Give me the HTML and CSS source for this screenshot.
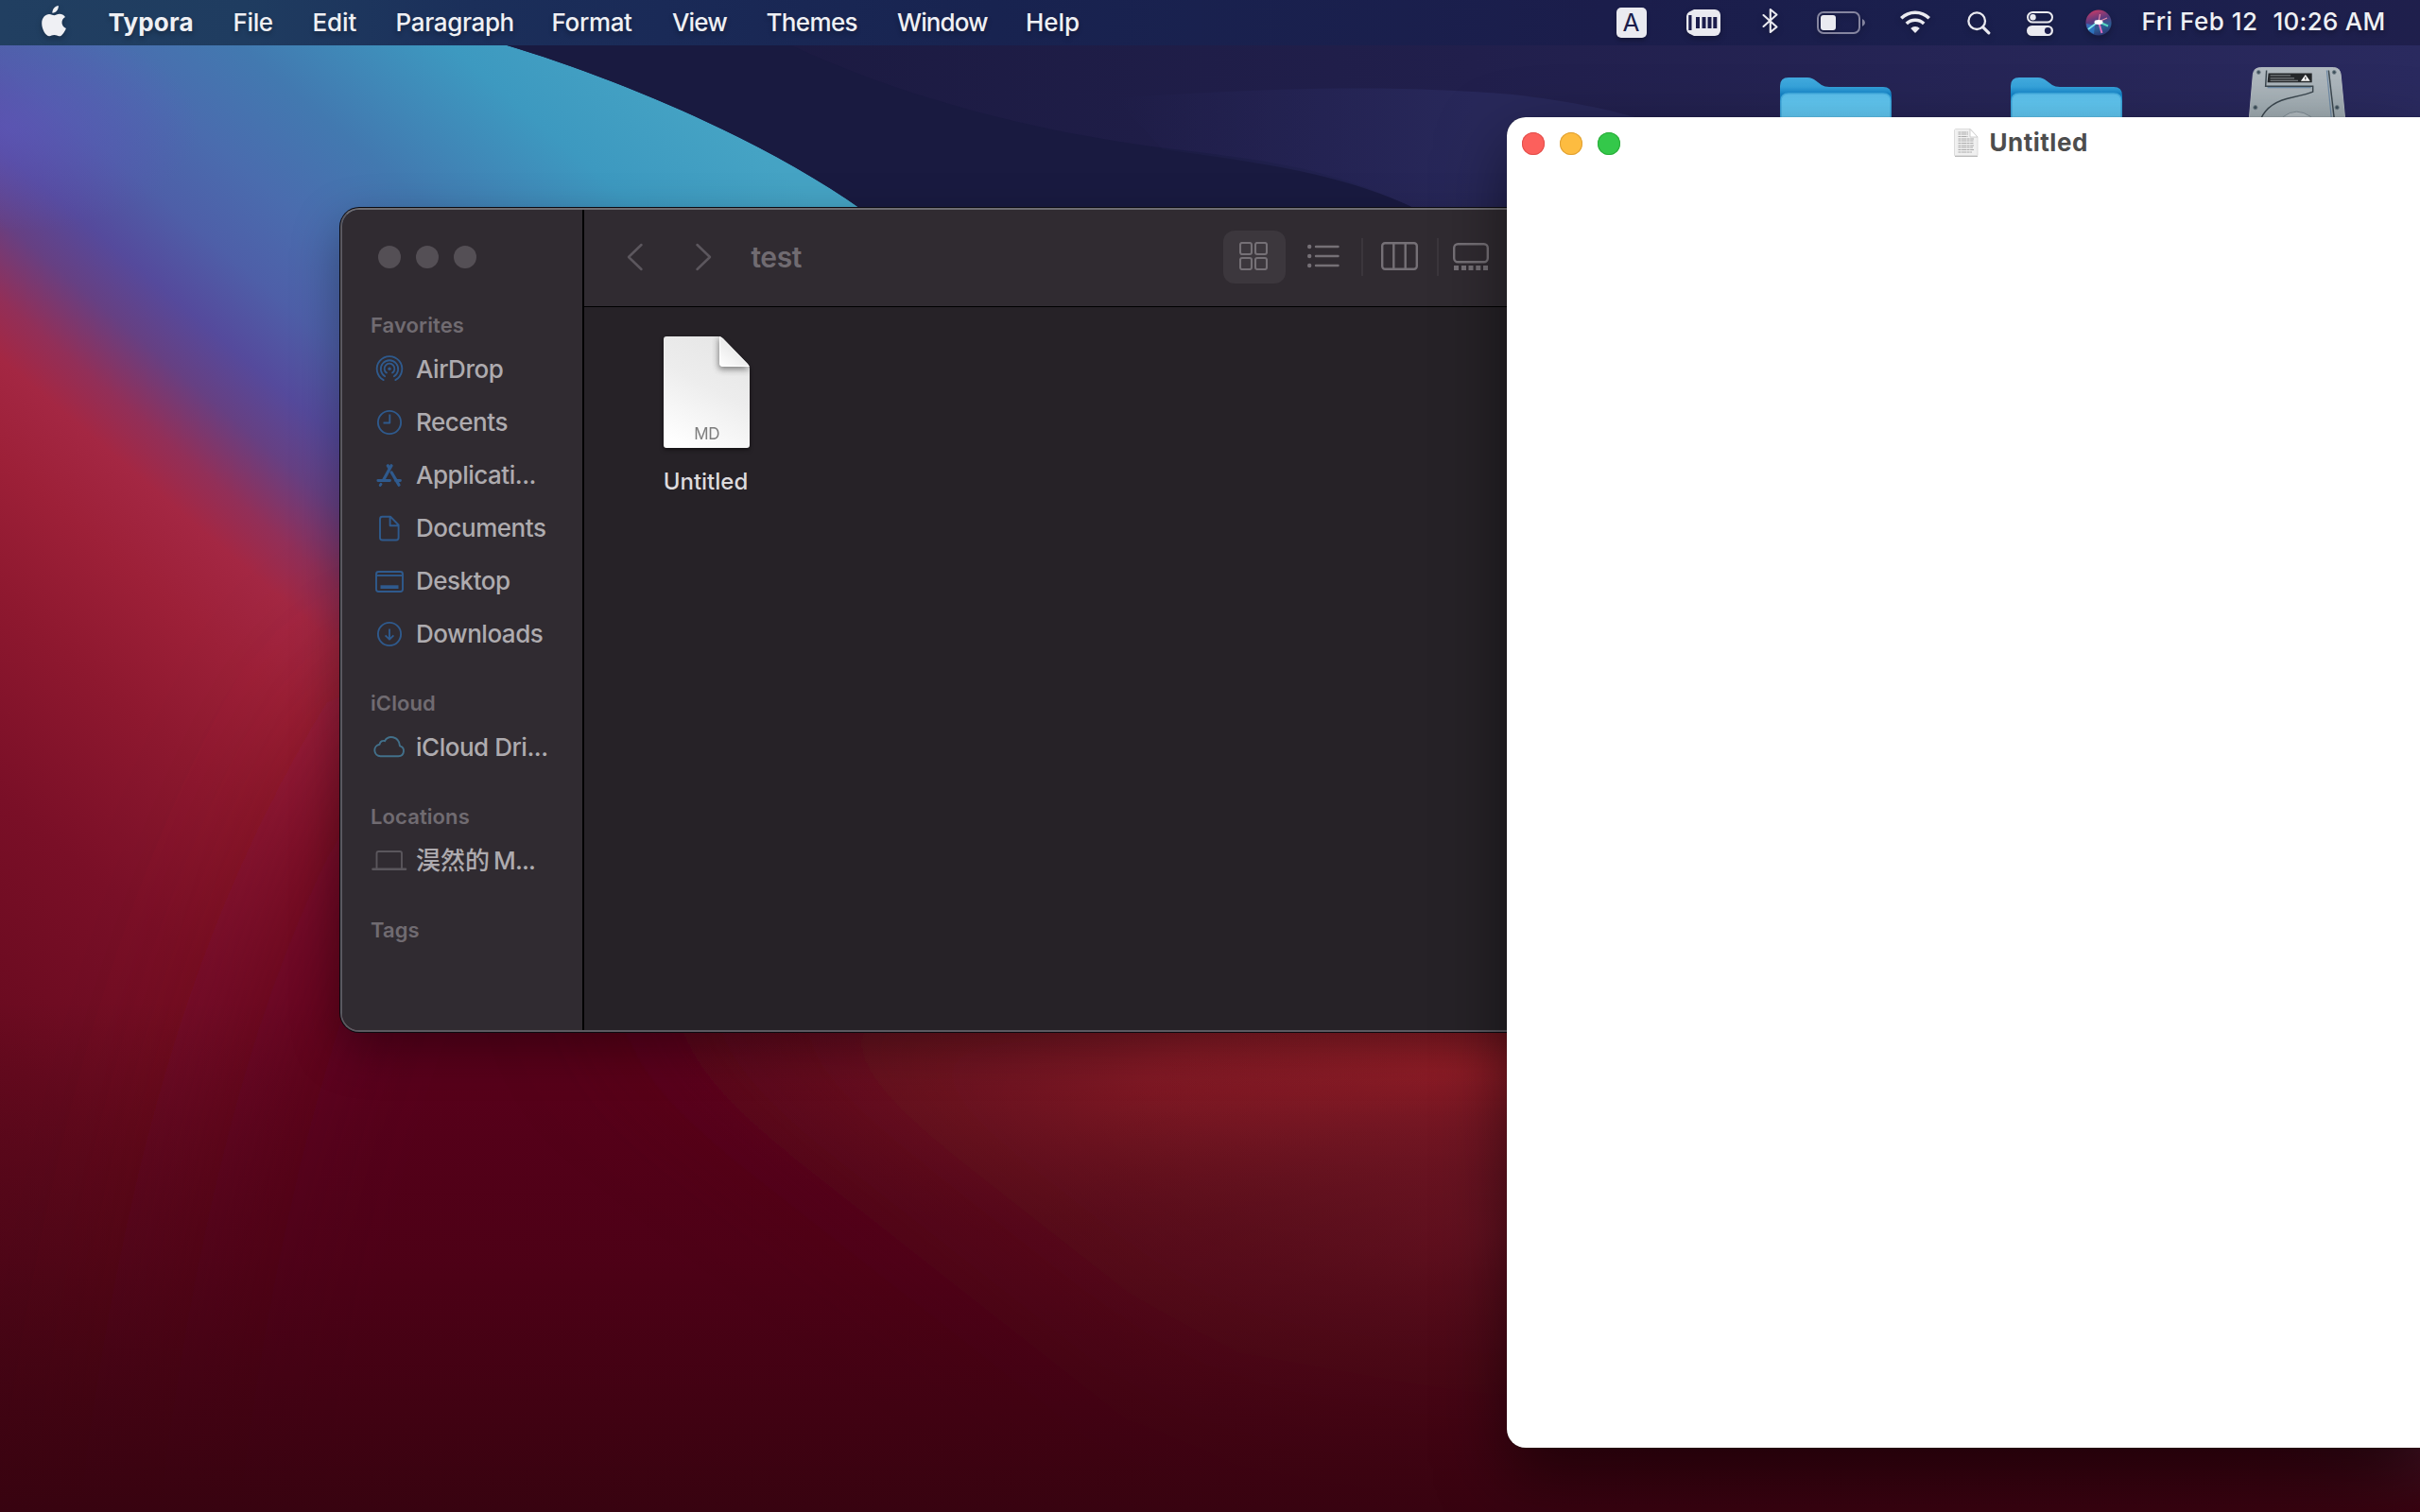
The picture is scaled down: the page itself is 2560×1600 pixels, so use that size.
FILE: index.html
```
<!DOCTYPE html>
<html lang="en">
<head>
<meta charset="utf-8">
<title>Desktop</title>
<link rel="stylesheet" href="styles.css">
</head>
<body>
<svg class="wallpaper" viewBox="0 0 2560 1600" preserveAspectRatio="none" aria-hidden="true">
  <defs>
    <linearGradient id="band" gradientUnits="userSpaceOnUse" x1="260" y1="-304" x2="-780" y2="912">
      <stop offset="0" stop-color="#45a3c4"/>
      <stop offset=".08" stop-color="#3d99c0"/>
      <stop offset=".17" stop-color="#4279b0"/>
      <stop offset=".23" stop-color="#4a6cae"/>
      <stop offset=".28" stop-color="#4e5fa8"/>
      <stop offset=".325" stop-color="#554a9c"/>
      <stop offset=".36" stop-color="#664083"/>
      <stop offset=".40" stop-color="#922f58"/>
      <stop offset=".43" stop-color="#a42743"/>
      <stop offset=".48" stop-color="#9d2038"/>
      <stop offset=".55" stop-color="#8e182f"/>
      <stop offset=".65" stop-color="#7a0f27"/>
      <stop offset=".78" stop-color="#680a1f"/>
      <stop offset="1" stop-color="#52071a"/>
    </linearGradient>
    <linearGradient id="floor" x1="0" y1="0" x2="0" y2="1">
      <stop offset="0" stop-color="#34020d" stop-opacity="0"/>
      <stop offset=".5" stop-color="#3a020f" stop-opacity=".42"/>
      <stop offset="1" stop-color="#380310"/>
    </linearGradient>
    <linearGradient id="navy" gradientUnits="userSpaceOnUse" x1="560" y1="0" x2="2560" y2="0">
      <stop offset="0" stop-color="#1a193e"/>
      <stop offset=".5" stop-color="#211f4c"/>
      <stop offset="1" stop-color="#2a2a5f"/>
    </linearGradient>
    <linearGradient id="swell" gradientUnits="userSpaceOnUse" x1="1180" y1="0" x2="1560" y2="0">
      <stop offset="0" stop-color="#252558" stop-opacity="0"/>
      <stop offset="1" stop-color="#28285a"/>
    </linearGradient>
    <radialGradient id="violet"><stop offset="0" stop-color="#6057bd"/><stop offset="1" stop-color="#6057bd" stop-opacity="0"/></radialGradient>
    <radialGradient id="ember"><stop offset="0" stop-color="#b0242c"/><stop offset=".4" stop-color="#98202a" stop-opacity=".7"/><stop offset="1" stop-color="#6a1820" stop-opacity="0"/></radialGradient>
    <radialGradient id="rose"><stop offset="0" stop-color="#801c2c"/><stop offset=".5" stop-color="#701826" stop-opacity=".6"/><stop offset="1" stop-color="#6a1622" stop-opacity="0"/></radialGradient>
    <filter id="soft" x="-40%" y="-40%" width="180%" height="180%"><feGaussianBlur stdDeviation="90"/></filter>
  </defs>
  <rect width="2560" height="1600" fill="url(#band)"/>
  <ellipse cx="10" cy="135" rx="200" ry="110" fill="url(#violet)" opacity=".6"/>
  <path d="M430 750H2560V1800H150Q200 1100 430 750Z" fill="#5c001b" filter="url(#soft)"/>
  <path d="M640 1000L1700 1000V1560L1250 1480Z" fill="#6e1820" opacity=".8" filter="url(#soft)"/>
  <ellipse cx="1540" cy="1135" rx="820" ry="210" fill="url(#ember)"/>
  <ellipse cx="1580" cy="1300" rx="480" ry="250" fill="url(#rose)" opacity=".8"/>
  <rect y="1060" width="2560" height="540" fill="url(#floor)"/>
  <path d="M480 32L533 47C660 85 810 150 912 222L1000 400H2560V0H480Z" fill="url(#navy)"/>
  <path d="M533 47C660 85 810 150 912 222H1500C1420 183 1360 172 1260 160C1080 140 940 96 837 48Z" fill="#191a40"/>
  <path d="M1180 104C1350 92 1480 90 1600 100C1660 107 1700 115 1740 127V222H1500C1420 183 1330 172 1230 158Z" fill="url(#swell)"/>
</svg>

<header class="menubar">
  <svg class="apple" viewBox="0 0 26 34"><path d="M17.800 0c.3 2.200-.6 4.200-1.800 5.600-1.200 1.400-3 2.400-4.600 2.200-.3-2 .7-4.200 1.800-5.400C14.400 1 16.300.100 17.800 0zM13.300 10.300c1.400 0 3.200-1.500 5.900-1.500 2 0 4.300 1 5.800 3.100-5.200 3-4.300 10 .9 12-.8 2.200-3.900 8.400-7.200 8.400-2 0-2.900-1.200-5.300-1.200s-3.300 1.200-5.200 1.200C4.500 32.300.200 25.200.200 18.800c0-6.300 4-9.800 7.800-9.800 2.400 0 4 1.300 5.300 1.300z" fill="#eff0f4"/></svg>
  <nav class="menus"><b>Typora</b><span>File</span><span>Edit</span><span>Paragraph</span><span>Format</span><span>View</span><span>Themes</span><span>Window</span><span>Help</span></nav>
  <div class="status">
    <span class="ime">A</span>
    <svg class="mem" viewBox="0 0 36 28"><path d="M8 0h22a6 6 0 0 1 6 6v16a6 6 0 0 1-6 6H8L3 25.500A6 6 0 0 1 0 21V7a6 6 0 0 1 3-4.500z" fill="#eaeaf0"/><path d="M2.300 6h3.200v16H2.300zM10 8h4v12h-4zM16.500 8h4v12h-4zM22.500 8h4v12h-4zM28.300 8h4v12h-4z" fill="#1b1c4b"/></svg>
    <svg class="bt" viewBox="0 0 18 28"><path d="M1.500 8L15.500 20.500 8.800 26V2l6.700 5.500L1.500 20" fill="none" stroke="#eaeaf0" stroke-width="2.100" stroke-linejoin="round" stroke-linecap="round"/></svg>
    <svg class="bat" viewBox="0 0 52 24"><rect x="1" y="1" width="44" height="22" rx="6" fill="none" stroke="#85859f" stroke-width="2"/><rect x="4" y="4" width="16" height="16" rx="3" fill="#eaeaf0"/><path d="M48 8q3 1.500 3 4t-3 4z" fill="#85859f"/></svg>
    <svg class="wifi" viewBox="0 0 32 24"><g fill="none" stroke="#eaeaf0" stroke-width="3.600"><path d="M1.200 8.300a21 21 0 0 1 29.600 0"/><path d="M6.800 14a13.200 13.200 0 0 1 18.400 0"/></g><path d="M16 24l-4.800-5a6.800 6.800 0 0 1 9.600 0z" fill="#eaeaf0"/></svg>
    <svg class="find" viewBox="0 0 25 25"><circle cx="10.200" cy="10.200" r="8.800" fill="none" stroke="#eaeaf0" stroke-width="2.300"/><path d="M16.800 16.800l6 6" stroke="#eaeaf0" stroke-width="3.200" stroke-linecap="round"/></svg>
    <svg class="cc" viewBox="0 0 28 26"><rect x="1" y="1" width="26" height="10.600" rx="5.300" fill="none" stroke="#eaeaf0" stroke-width="2"/><circle cx="6.500" cy="6.300" r="3.200" fill="#eaeaf0"/><rect y="15" width="28" height="11" rx="5.500" fill="#eaeaf0"/><circle cx="22.300" cy="20.500" r="3.400" fill="#1b1c4b"/></svg>
    <svg class="siri" viewBox="0 0 28 28">
      <defs><linearGradient id="orb" x1=".3" y1="0" x2=".6" y2="1"><stop offset="0" stop-color="#c93a66"/><stop offset=".4" stop-color="#5a3a80"/><stop offset=".7" stop-color="#2c5f95"/><stop offset="1" stop-color="#2b3470"/></linearGradient></defs>
      <circle cx="14" cy="14" r="13.600" fill="url(#orb)"/><path d="M1 15a13 13 0 0 0 8 11L10 17z" fill="#2f7fd0" opacity=".7"/>
      <path d="M13.500 13L3 21" stroke="#7fe8ea" stroke-width="1.800"/><path d="M14 13l10 4.500" stroke="#56d6c0" stroke-width="2"/><path d="M14 13l3.500 12" stroke="#e070c0" stroke-width="2"/><path d="M14 13L15.500 5M14 13l9-4" stroke="#e58aa8" stroke-width="1.300"/><ellipse cx="14" cy="13.500" rx="4.500" ry="2.400" fill="#fff"/>
    </svg>
    <span class="date">Fri Feb 12</span><span class="time">10:26 AM</span>
  </div>
</header>

<svg class="deskicon folder f1" viewBox="0 0 118 60">
  <defs>
    <linearGradient id="fb" x1="0" y1="0" x2="0" y2="1"><stop offset="0" stop-color="#42aadf"/><stop offset=".16" stop-color="#36a4dc"/><stop offset=".3" stop-color="#1583c6"/><stop offset="1" stop-color="#1583c6"/></linearGradient>
    <linearGradient id="ff" x1="0" y1="0" x2="0" y2="1"><stop offset="0" stop-color="#5cbfec"/><stop offset=".2" stop-color="#60c7f2"/><stop offset="1" stop-color="#62c8f3"/></linearGradient>
  </defs>
  <path d="M0 60V9Q0 0 9 0H29Q34 0 38 3.500L44 8Q47 10 52 10H109Q118 10 118 19V60Z" fill="url(#fb)"/>
  <path d="M1 60V25Q1 17 9 17H109Q117 17 117 25V60Z" fill="url(#ff)" stroke="#47b0e2" stroke-width="1.500"/>
</svg>
<svg class="deskicon folder f2" viewBox="0 0 118 60">
  <path d="M0 60V9Q0 0 9 0H29Q34 0 38 3.500L44 8Q47 10 52 10H109Q118 10 118 19V60Z" fill="url(#fb)"/>
  <path d="M1 60V25Q1 17 9 17H109Q117 17 117 25V60Z" fill="url(#ff)" stroke="#47b0e2" stroke-width="1.500"/>
</svg>
<svg class="deskicon disk" viewBox="0 0 106 60">
  <defs><linearGradient id="hd" x1="0" y1="0" x2="0" y2="1"><stop offset="0" stop-color="#b2bac0"/><stop offset="1" stop-color="#9eabb1"/></linearGradient></defs>
  <path d="M1 60L5.500 8Q6.500 1 14 1H92Q99 1 100 8L105 60Z" fill="url(#hd)" stroke="#b5bcc2"/>
  <g fill="none" stroke="#3b474f" stroke-width="1.500"><path d="M20 4L19 21H70V27Q66 29 48 33Q22 38 14 56"/><path d="M87 4L93 56"/></g>
  <path d="M85 4L90 56M21 22.500H68" stroke="#6d89a5" stroke-width="1.200"/>
  <path d="M22 7H69V17H21Z" fill="#25282b"/><path d="M24 9.500H46M24 12.500H50M24 15H54" stroke="#8e9396" stroke-width="1"/><path d="M62 8.500L67 15.500H57Z" fill="#fff"/><path d="M62 11V14" stroke="#222"/>
  <g fill="#3e505b" stroke="#78868e"><circle cx="11.500" cy="6" r="2"/><circle cx="93" cy="6" r="2"/><circle cx="8" cy="44" r="2.200"/><circle cx="96" cy="44" r="2.200"/></g>
  <path d="M38 54Q52 43 68 54" fill="#b4bec3" stroke="#7d8b93"/>
</svg>

<main class="finder">
  <aside class="sidebar">
    <div class="dots"><i></i><i></i><i></i></div>
    <h2>Favorites</h2>
    <div class="row"><svg viewBox="0 0 40 40"><g fill="none" stroke-width="1.800" stroke-linecap="round"><path d="M13.700 31.100a13.300 13.300 0 1 1 12.600 0"/><path d="M15.200 27.300a9.200 9.200 0 1 1 9.600 0"/><path d="M17 23.600a5.400 5.400 0 1 1 6 0"/></g><circle cx="20" cy="19.300" r="1.700" class="solid"/></svg><span>AirDrop</span></div>
    <div class="row"><svg viewBox="0 0 40 40"><circle cx="20" cy="20" r="12.100"/><path d="M20.300 11.500V20.500H13.500"/></svg><span>Recents</span></div>
    <div class="row"><svg viewBox="0 0 40 40"><g stroke-width="3.200" stroke-linecap="round"><path d="M18.300 9.800L20 12.800M22 9.800L13.600 25M22.200 17L30 30.200" /><path d="M7.800 25.500H20.500M26.500 25.500H31.500M11 29.300L10.200 30.500" stroke-width="2.800"/></g></svg><span>Applicati...</span></div>
    <div class="row"><svg viewBox="0 0 40 40"><path d="M12.500 7.700H21L29.600 16.500V30a2.500 2.500 0 0 1-2.500 2.500H12.500A2.500 2.500 0 0 1 10 30V10.200a2.500 2.500 0 0 1 2.500-2.500zM20.600 8V17.200H29.500"/></svg><span>Documents</span></div>
    <div class="row"><svg viewBox="0 0 40 40"><rect x="6" y="10" width="28" height="21" rx="2.500"/><path d="M6 14H34"/><rect x="10.500" y="24.300" width="19" height="3.700" class="solid"/></svg><span>Desktop</span></div>
    <div class="row"><svg viewBox="0 0 40 40"><circle cx="20" cy="20" r="12.100"/><path d="M20 14.500V25.500M15.600 21.300L20 25.700L24.400 21.300"/></svg><span>Downloads</span></div>
    <h2>iCloud</h2>
    <div class="row cloud"><svg viewBox="0 0 40 40"><path d="M10.500 29.200a6.300 6.300 0 0 1-1-12.500C10.200 13.500 12.600 12.300 15 13.200C18.500 6.800 30 7.500 31 18.300C37 20 36 29.200 29.500 29.200Z"/></svg><span>iCloud Dri...</span></div>
    <h2>Locations</h2>
    <div class="row mac"><svg viewBox="0 0 40 40"><path d="M6.500 28V12a2 2 0 0 1 2-2H31a2 2 0 0 1 2 2V28"/><path d="M2.500 28.800H37" stroke-width="2.600" stroke-linecap="round"/></svg><span>淏然的<span class="latin">M...</span></span></div>
    <h2>Tags</h2>
  </aside>
  <section class="content">
    <div class="toolbar">
      <svg class="nav" viewBox="0 0 90 30"><g fill="none" stroke-width="2.500" stroke-linecap="round" stroke-linejoin="round"><path d="M15.500 2L2 15L15.500 28" stroke="#5c575e"/><path d="M74.500 2L88 15L74.500 28" stroke="#5c575e"/></g></svg>
      <h1>test</h1>
      <div class="views">
        <span class="sel"><svg width="30" height="30" viewBox="0 0 30 30"><g fill="none" stroke="#757076" stroke-width="2.100"><rect x="1" y="1" width="12" height="12" rx="2"/><rect x="17" y="1" width="12" height="12" rx="2"/><rect x="1" y="17" width="12" height="12" rx="2"/><rect x="17" y="17" width="12" height="12" rx="2"/></g></svg></span>
        <svg class="list" width="34" height="26" viewBox="0 0 34 26"><g fill="#757076"><circle cx="2.200" cy="3" r="2.200"/><circle cx="2.200" cy="13" r="2.200"/><circle cx="2.200" cy="23" r="2.200"/></g><path d="M9 3H32.500M9 13H32.500M9 23H32.500" stroke="#757076" stroke-width="2.400" stroke-linecap="round"/></svg>
        <i></i>
        <svg class="cols" width="39" height="30" viewBox="0 0 39 30"><g fill="none" stroke="#757076" stroke-width="2.400"><rect x="1.200" y="1.200" width="36.600" height="27.600" rx="3"/><path d="M13.300 1V29M25.700 1V29"/></g></svg>
        <i></i>
        <svg class="gal" width="38" height="30" viewBox="0 0 38 30"><rect x="1.200" y="1.200" width="35.600" height="19" rx="4" fill="none" stroke="#757076" stroke-width="2.400"/><path d="M1 24H6V29H1zM9 24H14V29H9zM16.500 24H21.500V29H16.500zM24.300 24H29.300V29H24.300zM32 24H37V29H32z" fill="#757076"/></svg>
      </div>
    </div>
    <div class="files">
      <figure>
        <svg viewBox="0 0 91 118">
          <defs>
            <linearGradient id="pg" x1=".7" y1="0" x2=".3" y2="1"><stop offset="0" stop-color="#e6e6e6"/><stop offset=".45" stop-color="#ededed"/><stop offset="1" stop-color="#fefefe"/></linearGradient>
            <linearGradient id="fl" x1=".7" y1=".3" x2=".1" y2="1"><stop offset="0" stop-color="#e4e4e4"/><stop offset="1" stop-color="#fdfdfd"/></linearGradient>
            <clipPath id="pc"><path d="M3 0H58Q61 0 63 2L89 29Q91 31 91 34V115Q91 118 88 118H3Q0 118 0 115V3Q0 0 3 0Z"/></clipPath>
            <filter id="fs" x="-40%" y="-40%" width="180%" height="180%"><feGaussianBlur stdDeviation="3"/></filter>
          </defs>
          <g clip-path="url(#pc)"><rect width="91" height="118" fill="url(#pg)"/><path d="M58 0V31Q58 35 62 35H92Z" fill="#666" opacity=".8" filter="url(#fs)"/><path d="M59.500 0V29Q59.500 31.500 62 31.500H91Z" fill="url(#fl)" stroke="#fff"/></g>
          <text x="32.300" y="108.500" font-size="17" letter-spacing="-.4">MD</text>
        </svg>
        <figcaption>Untitled</figcaption>
      </figure>
    </div>
  </section>
</main>

<article class="editor">
  <div class="lights"><i class="r"></i><i class="y"></i><i class="g"></i></div>
  <svg class="doc" width="26" height="31" viewBox="0 0 26 31"><path d="M1.500.500H17L25 9V28.500H.500V1.500z" fill="#f0f0f0" stroke="#dcdcdc"/><path d="M1 29.500H25" stroke="#bbb"/><path d="M17 .500V9H25z" fill="#fff" stroke="#c4c4c4" stroke-width=".800"/><path d="M4.500 4H15M4.500 6H15M4.500 8.500H14.500M4.500 11H21M4.500 13H20.500M4.500 15.500H20.500M4.500 18H21M4.500 20H20M4.500 22.500H21M4.500 25H19" stroke="#a9a9a9" stroke-width="1.200" stroke-dasharray="3 .6 5 .5"/></svg>
  <h1>Untitled</h1>
</article>
</body>
</html>
```
FILE: styles.css
```
* { box-sizing: border-box; }
body {
  margin: 0;
  width: 2560px;
  height: 1600px;
  overflow: hidden;
  position: relative;
  font-family: Inter, "Noto Sans CJK SC", sans-serif;
  font-size: 26px;
  font-weight: 500;
}
svg { display: block; flex: none; }
h1, h2, figure { margin: 0; }
.wallpaper { position: absolute; inset: 0; width: 2560px; height: 1600px; z-index: -1; }

/* Menu bar */
.menubar {
  height: 48px;
  padding: 0 36.500px 0 44px;
  display: flex;
  align-items: flex-start;
  color: #eff0f4;
  line-height: 47px;
  white-space: nowrap;
  background: linear-gradient(90deg, #213f61 0, #1f3c60 260px, #1b2f5a 500px, #1a2a57 700px, #182350 1050px, #1b1d4b 1700px, #1a204e 2200px, #1f1f4c 2560px);
}
.menubar svg { filter: drop-shadow(0 3px 3px rgba(0, 0, 0, .25)); }
.menus, .date, .time { text-shadow: 0 3px 5px rgba(0, 0, 0, .3); }
.apple { width: 26px; height: 34px; margin: 6px 44.500px 0 0; }
.menus { display: grid; grid-template-columns: 132px 84px 88px 165px 127.500px 99.500px 138.500px 136px auto; }
.menus b { font-weight: 700; letter-spacing: .2px; }
.menus span { letter-spacing: -.35px; }
.menus span:nth-child(6), .menus span:nth-child(8) { letter-spacing: -.9px; }
.menus span:nth-child(7) { letter-spacing: -.65px; }
.menus span:nth-child(3), .menus span:nth-child(9) { letter-spacing: -.08px; }
.status { margin-left: auto; display: flex; align-items: flex-start; }
.ime {
  width: 32px; height: 32px; margin: 8px 42px 0 0;
  border-radius: 5px; background: #eaeaf0; color: #1b1c4b;
  font-weight: 400; line-height: 32px; text-align: center;
  box-shadow: 0 3px 4px rgba(0, 0, 0, .25);
}
.mem { width: 36px; height: 28px; margin: 10px 44.500px 0 0; }
.bt { width: 18px; height: 28px; margin: 8px 39.500px 0 0; }
.bat { width: 52px; height: 24px; margin: 12px 36px 0 0; }
.wifi { width: 32px; height: 24px; margin: 11px 39px 0 0; }
.find { width: 25px; height: 25px; margin: 11.500px 38px 0 0; }
.cc { width: 28px; height: 26px; margin: 12px 34px 0 0; }
.siri { width: 28px; height: 28px; margin: 10px 32px 0 0; }
.date { letter-spacing: .5px; width: 139px; line-height: 46px; }
.time { letter-spacing: .25px; line-height: 46px; }

/* Desktop items */
.deskicon { position: absolute; }
.folder { width: 118px; height: 60px; top: 82px; }
.f1 { left: 1883px; }
.f2 { left: 2127px; }
.disk { width: 104px; height: 60px; left: 2378px; top: 70px; }

/* File browser window */
.finder {
  position: absolute; left: 360px; top: 220px;
  width: 1500px; height: 872px;
  display: flex;
  border: 2px solid #5b5960;
  border-top-color: #6f6d71;
  border-radius: 20px;
  background: #262227;
  background-clip: padding-box;
  overflow: hidden;
  box-shadow: 0 0 0 1px #0b0a10, 0 18px 50px rgba(0, 0, 0, .35);
}
.sidebar { width: 256px; background: #302b31; border-right: 2px solid #000; flex: none; padding: 38px 0 0 30px; }
.dots { display: flex; gap: 16px; margin-left: 8px; }
.dots i { width: 24px; height: 24px; border-radius: 50%; background: #544f55; }
.sidebar h2 { margin: 26px 0 0 0; height: 38px; font-size: 22px; font-weight: 600; line-height: 38px; color: #706b71; letter-spacing: .1px; }
.dots + h2 { margin-top: 41px; }
.row { height: 56px; display: flex; align-items: center; gap: 8px; color: #aeabaf; letter-spacing: -.48px; line-height: 56px; white-space: nowrap; }
.row svg { width: 40px; height: 40px; fill: none; stroke: #2f5a8d; stroke-width: 1.900px; stroke-linejoin: round; }
.row .solid { fill: #2f5a8d; stroke: none; }
.cloud svg { stroke: #42708a; }
.mac svg { stroke: #5a565c; }
.mac { letter-spacing: 0; }
.latin { margin-left: 4px; letter-spacing: -.8px; }
.content { flex: 1; }
.toolbar { height: 103px; background: #302b31; border-bottom: 1px solid #000; display: flex; align-items: center; padding-left: 45px; }
.nav { width: 90px; height: 30px; margin-top: -3px; }
.toolbar h1 { font-size: 30px; font-weight: 600; letter-spacing: -.45px; color: #706b71; margin: -3px 0 0 41.500px; width: 499px; line-height: 40px; }
.views { display: flex; align-items: center; margin-top: -2px; }
.views i { width: 2px; height: 40px; background: #3b363c; }
.sel { width: 66px; height: 56px; border-radius: 12px; background: #3c373d; padding: 12px 0 0 17px; }
.list { margin: -3px 23px 0; }
.cols { margin: -2px 20px 0 19px; }
.gal { margin: -1px 0 0 15px; }
.files { padding: 31px 0 0 84px; }
.files figure { width: 91px; }
.files svg { width: 91px; height: 118px; filter: drop-shadow(0 2px 2px rgba(0, 0, 0, .5)); }
.files text { fill: #7d7d7d; font-weight: 400; }
.files figcaption { margin: 21px 1px 0 -1px; font-size: 24px; line-height: 30px; color: #dddbdd; text-align: center; }

/* Editor window */
.editor {
  position: absolute; left: 1594px; top: 124px;
  width: 966px; height: 1408px;
  border-radius: 20px 0 0 20px;
  background: #fff;
  display: flex; align-items: flex-start;
  box-shadow: 0 0 1px rgba(0, 0, 0, .6), 0 28px 70px rgba(0, 0, 0, .5);
}
.lights { display: flex; gap: 16px; margin: 16px 353px 0 16px; }
.lights i { width: 24px; height: 24px; border-radius: 50%; }
.r { background: #fc605c; box-shadow: inset 0 0 0 1px #e2504d; }
.y { background: #fdbc40; box-shadow: inset 0 0 0 1px #dfa034; }
.g { background: #34c84a; box-shadow: inset 0 0 0 1px #2bac3a; }
.doc { margin: 12px 11.500px 0 0; }
.editor h1 { font-size: 26px; font-weight: 700; line-height: 40px; letter-spacing: .5px; color: #4d4d4d; margin: 7px 0 0; }
```
